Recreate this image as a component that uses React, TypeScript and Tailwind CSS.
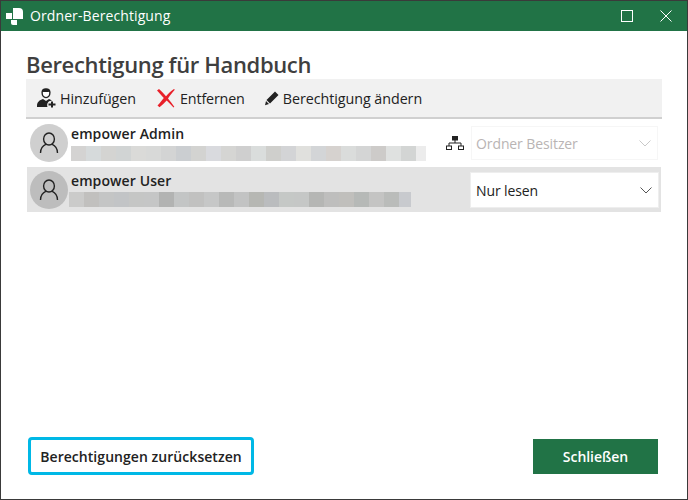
const font = { fontFamily: '"Open Sans", "Noto Sans", sans-serif' };

const adminBlur = ["#d4d3d2","#d6dadb","#d4d4d2","#d1d4d4","#dadad8","#d8d9d8","#d3d4d4","#cbced1","#d3d3d1","#d9dade","#d5d5d3","#cfcfcf","#dadddc","#cfcfcc","#d3d4d6","#e0e0dd","#d3d5d7","#d6d2cf","#dadcdb","#d4d5d5","#cdcbc9","#dfe1e0","#d3d5d4"];
const userBlur = ["#cbcbca","#c1c0be","#c4c5c5","#c2c4c6","#c5c6c5","#c5c6c6","#b2b3b2","#c3c5c5","#c1c1c0","#c6c7c7","#b8b9b8","#c2c3c3","#b6b7b3","#babcbe","#c5c8c6","#c5c7c6","#b5b6b4","#bebebd","#c0bfbc","#b6b9b7","#c4c4c3","#babcba"];

function Avatar({ dark }: { dark?: boolean }) {
  return (
    <div className={`flex h-[38px] w-[38px] shrink-0 items-center justify-center rounded-full ${dark ? "bg-[#bdbdbd]" : "bg-[#cfcfcf]"}`}>
      <svg width="20" height="22" viewBox="0 0 20 22" fill="none" stroke="#222" strokeWidth="1.4">
        <ellipse cx="10" cy="7" rx="5.4" ry="6" />
        <path d="M1.5 21c0-4.5 3-7.6 5.6-8.8M18.500 21c0-4.500-3-7.600-5.600-8.800" />
      </svg>
    </div>
  );
}

function Blur({ colors, last, lastWidth }: { colors: string[]; last: string; lastWidth: string }) {
  return (
    <div className="flex h-[15px]">
      {colors.map((c, i) => (
        <div key={i} className="h-[15px] w-[15px]" style={{ backgroundColor: c }} />
      ))}
      <div className={`h-[15px] ${lastWidth}`} style={{ backgroundColor: last }} />
    </div>
  );
}

function Chevron({ color }: { color: string }) {
  return (
    <svg width="12" height="7" viewBox="0 0 12 7" fill="none" stroke={color} strokeWidth="1">
      <path d="M0.5 0.5L6 6L11.5 0.5" />
    </svg>
  );
}

export default function App() {
  return (
    <div className="flex h-[500px] w-[688px] flex-col overflow-hidden border border-[#3a3a3a] bg-white" style={font}>
      <div className="flex h-[30px] shrink-0 items-center bg-[#217346] text-white">
        <svg className="ml-[4px]" width="19" height="19" viewBox="0 0 19 19" fill="#fff">
          <path d="M1 6h6v6H1z" />
          <path d="M8 1h6a4 4 0 0 1 4 4v7H8z" />
          <path d="M6 13h6v5H8a2 2 0 0 1-2-2z" />
        </svg>
        <span className="ml-[6px] text-[14px] leading-none tracking-[0.1px]">Ordner-Berechtigung</span>
        <div className="ml-auto mr-[15px] flex items-center gap-[27px]">
          <div className="h-[12px] w-[12px] border border-white" />
          <svg width="12" height="12" viewBox="0 0 12 12" stroke="#fff" strokeWidth="1" fill="none">
            <path d="M0.5 0.5L11.5 11.5M11.5 0.5L0.5 11.5" />
          </svg>
        </div>
      </div>

      <div className="flex min-h-0 flex-1 flex-col pl-[25px] pr-[25px]">
        <h1 className="mt-[18px] h-[30px] text-[22px] font-semibold leading-[31px] tracking-[-0.35px] text-[#3f3f3f]">Berechtigung für Handbuch</h1>
        <div className="flex h-[40px] shrink-0 items-center gap-[20px] border-b-2 border-[#d0d0d0] bg-[#f1f1f1] pl-[10px] text-[14.3px] tracking-[-0.05px] text-[#222]">
          <div className="flex items-center gap-[4px]">
            <svg width="20" height="20" viewBox="0 0 20 20" fill="#222">
              <path d="M10 1c-2.400 0-3.900 1.400-3.900 3.600 0 2.600 1.500 5 3.900 5s3.900-2.400 3.900-5C13.900 2.400 12.400 1 10 1z" fill="#fff" stroke="#222" strokeWidth="1.4" />
              <path d="M6 3.800c2 .4 5 .4 8 0l-.3-1.500L10 .8 6.400 2.200z" />
              <path d="M1 18c0-4 2.600-6 6-7l3 2 3-2c1.200.4 2.200.9 3 1.700a4.500 4.500 0 0 0-4.500 6.300H1z" />
              <path d="M15 13.500h2v2h2.500v2H17v2h-2v-2h-2.500v-2H15z" />
            </svg>
            <span className="pt-[1px]">Hinzufügen</span>
          </div>
          <div className="flex items-center gap-[4px]">
            <svg width="20" height="20" viewBox="0 0 20 20" fill="#e8202a">
              <path d="M1 2.500L3 1c2 1.500 4.800 4.800 7 7.200C12.300 5.500 15.200 2.800 18 1l.8.700c-2.200 2.700-5 6-6.800 8.700 2 2.500 4.500 5.500 6.300 8.300l-.8.800c-2.400-2.600-4.700-5-6.800-7-2.200 2.400-4.500 4.700-7.200 6.700L1.500 17.500c2.200-2.200 4.500-5 6.300-7.400C5.800 7.600 3 4.800 1 2.500z" />
            </svg>
            <span className="pt-[1px] tracking-[-0.15px]">Entfernen</span>
          </div>
          <div className="-ml-[1px] flex items-center gap-[3px]">
            <svg width="16" height="16" viewBox="0 0 16 16" fill="#222">
              <path d="M11 1.500l3.500 3.500-8.500 8.500-3.500-3.500zM2 11l3 3-4 1.200z" />
            </svg>
            <span className="pt-[1px]">Berechtigung ändern</span>
          </div>
        </div>

        <div className="flex h-[48px] shrink-0 items-center pl-[4px] pr-[3px]">
          <Avatar />
          <div className="ml-[3px] flex h-full w-[355px] flex-col pt-[4px]">
            <div className="h-[23px] text-[14px] font-[550] leading-[22px] tracking-[0.1px] text-[#222]">empower Admin</div>
            <Blur colors={adminBlur} last="#ececec" lastWidth="w-[10px]" />
          </div>
          <svg className="ml-[20px]" width="18" height="14" viewBox="0 0 18 14" fill="none" stroke="#222" strokeWidth="1">
            <rect x="6.500" y="0.500" width="5" height="3.500" fill="#222" />
            <path d="M9 4v3M3 10V7h12v3" />
            <rect x="0.500" y="10" width="5" height="3.500" />
            <rect x="12.500" y="10" width="5" height="3.500" />
          </svg>
          <div className="ml-[7px] flex h-[34px] w-[187px] items-center justify-between border border-[#f6f6f6] pl-[4px] pr-[6px] text-[14px] tracking-[-0.1px] text-[#b9b4b4]">
            <span>Ordner Besitzer</span>
            <Chevron color="#c9c9c9" />
          </div>
        </div>

        <div className="mx-[1px] flex h-[45px] shrink-0 items-center bg-[#e3e3e3] pl-[3px] pr-[3px]">
          <Avatar dark />
          <div className="ml-[1px] flex h-full w-[362px] flex-col pt-[3px]">
            <div className="ml-[2px] h-[22px] text-[14px] font-[550] leading-[22px] tracking-[0.1px] text-[#222]">empower User</div>
            <Blur colors={userBlur} last="#c8cace" lastWidth="w-[12px]" />
          </div>
          <div className="ml-auto mt-[1px] flex h-[34px] w-[187px] items-center justify-between bg-white pl-[5px] pr-[6px] text-[14px] tracking-[-0.1px] text-[#222] shadow-[0_0_0_1px_#eeeeee]">
            <span>Nur lesen</span>
            <Chevron color="#555" />
          </div>
        </div>

        <div className="mt-auto mb-[24px] ml-[2px] flex items-center justify-between pr-[4px]">
          <button className="flex h-[38px] w-[226px] items-center justify-center rounded-[4px] border-[3px] border-[#00b8e6] bg-white text-[14px] font-[550] tracking-[0.05px] text-[#222]">
            Berechtigungen zurücksetzen
          </button>
          <button className="flex h-[35px] w-[125px] items-center justify-center bg-[#217346] text-[14px] font-semibold tracking-[-0.05px] text-white">
            Schließen
          </button>
        </div>
      </div>
    </div>
  );
}
